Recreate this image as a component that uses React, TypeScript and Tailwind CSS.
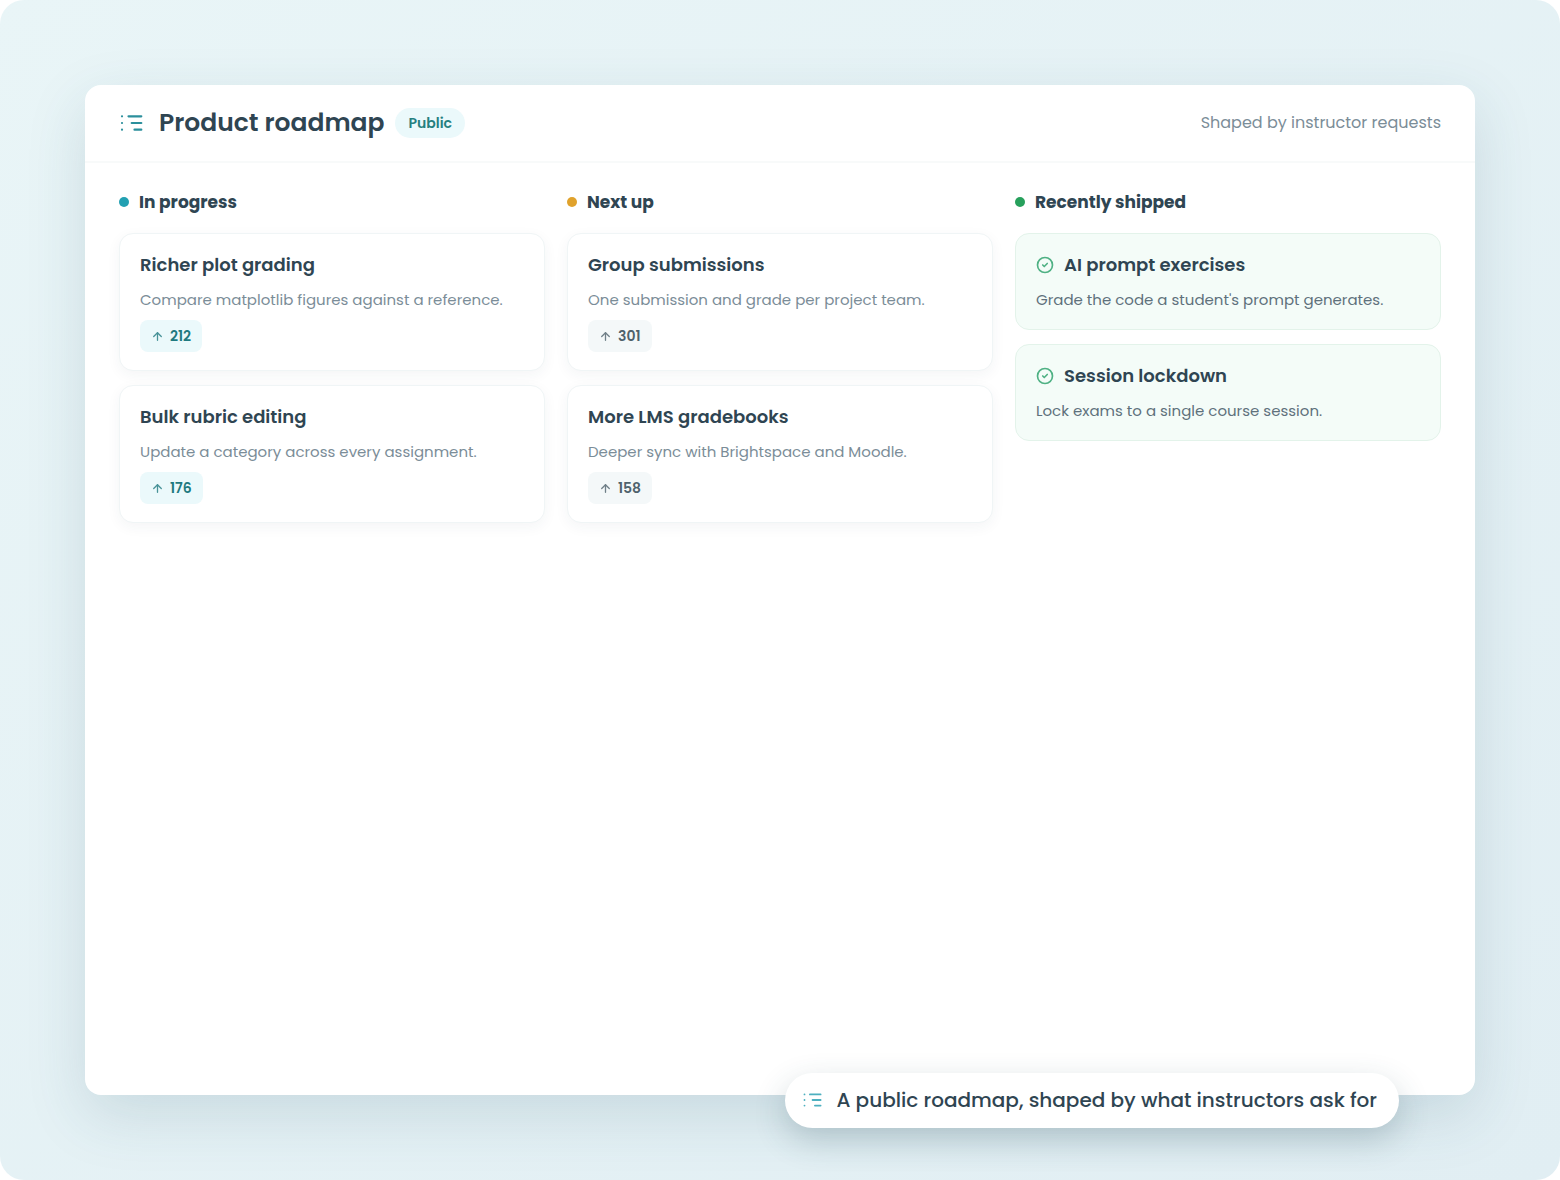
import { ArrowUp, CircleCheck } from "lucide-react";

interface RoadmapItem {
  title: string;
  description: string;
  votes?: number;
}

interface RoadmapColumn {
  label: string;
  dot: string;
  chip?: string;
  items: RoadmapItem[];
}

const columns: RoadmapColumn[] = [
  {
    label: "In progress",
    dot: "bg-[#22a0b2]",
    chip: "bg-[#ebf9fb] text-[#1f7a80]",
    items: [
      {
        title: "Richer plot grading",
        description: "Compare matplotlib figures against a reference.",
        votes: 212,
      },
      {
        title: "Bulk rubric editing",
        description: "Update a category across every assignment.",
        votes: 176,
      },
    ],
  },
  {
    label: "Next up",
    dot: "bg-[#e0a22c]",
    chip: "bg-[#f4f8f9] text-[#4f626c]",
    items: [
      {
        title: "Group submissions",
        description: "One submission and grade per project team.",
        votes: 301,
      },
      {
        title: "More LMS gradebooks",
        description: "Deeper sync with Brightspace and Moodle.",
        votes: 158,
      },
    ],
  },
  {
    label: "Recently shipped",
    dot: "bg-[#27a05c]",
    items: [
      {
        title: "AI prompt exercises",
        description: "Grade the code a student's prompt generates.",
      },
      {
        title: "Session lockdown",
        description: "Lock exams to a single course session.",
      },
    ],
  },
];

function RoadmapIcon({ className }: { className?: string }) {
  return (
    <svg
      viewBox="0 0 24 24"
      fill="none"
      stroke="currentColor"
      strokeWidth="2.2"
      strokeLinecap="round"
      className={className}
      aria-hidden="true"
    >
      <path d="M9.5 5.3h12.8M12.7 12h9.6M15.5 18.7h6.8" />
      <path d="M3 5.3h.01M3 12h.01M3 18.7h.01" />
    </svg>
  );
}

function OpenCard({ item, chip }: { item: RoadmapItem; chip?: string }) {
  return (
    <article className="rounded-[14px] border border-[#f0f5f6] bg-white px-5 py-[18px] shadow-[0_4px_14px_rgba(30,60,70,0.05)]">
      <h3 className="text-lg leading-[26px] font-semibold">{item.title}</h3>
      <p className="mt-2.5 text-[15px] leading-[23px] text-[#7b8d98]">
        {item.description}
      </p>
      <div
        className={`mt-[9px] flex h-8 w-fit items-center gap-1.5 rounded-lg px-[11px] text-sm font-semibold ${chip}`}
      >
        <ArrowUp className="size-[13px] opacity-80" strokeWidth={2.4} />
        {item.votes}
      </div>
    </article>
  );
}

function ShippedCard({ item }: { item: RoadmapItem }) {
  return (
    <article className="rounded-[14px] border border-[#e3f3ea] bg-[#f4fcf8] px-5 py-[18px]">
      <h3 className="flex items-center gap-2.5 text-lg leading-[26px] font-semibold">
        <CircleCheck className="size-[18px] text-[#4fb184]" strokeWidth={2.2} />
        {item.title}
      </h3>
      <p className="mt-2.5 text-[15px] leading-[23px] text-[#5f717c]">
        {item.description}
      </p>
    </article>
  );
}

export default function App() {
  return (
    <div className="bg-white font-['Poppins','Inter',sans-serif] text-[#2f4552]">
      <main className="relative flex min-h-screen flex-col rounded-[24px] bg-linear-to-br from-[#e9f5f7] to-[#e1eef3] p-[85px]">
        <section className="flex-1 rounded-2xl bg-white shadow-[0_20px_60px_rgba(40,90,105,0.15)]">
          {/* Header */}
          <header className="flex h-[78px] items-center border-b-2 border-[#f8fafa] px-[34px]">
            <RoadmapIcon className="size-6 text-[#2b8f9c]" />
            <h1 className="ml-4 text-[25px] leading-8 font-semibold">
              Product roadmap
            </h1>
            <span className="ml-[11px] rounded-full bg-[#ebf9fb] px-[13px] py-[5px] text-sm font-semibold text-[#25807f]">
              Public
            </span>
            <p className="ml-auto text-base text-[#7b8d98]">
              Shaped by instructor requests
            </p>
          </header>

          {/* Columns */}
          <div className="grid grid-cols-3 gap-[22px] px-[34px] pt-[25px] pb-8">
            {columns.map((column) => (
              <section key={column.label}>
                <h2 className="flex items-center gap-2.5 text-[17px] leading-7 font-bold">
                  <span className={`size-2.5 rounded-full ${column.dot}`} />
                  {column.label}
                </h2>
                <div className="mt-[17px] flex flex-col gap-[14px]">
                  {column.items.map((item) =>
                    item.votes ? (
                      <OpenCard key={item.title} item={item} chip={column.chip} />
                    ) : (
                      <ShippedCard key={item.title} item={item} />
                    )
                  )}
                </div>
              </section>
            ))}
          </div>
        </section>

        {/* Floating caption */}
        <p className="absolute right-[161px] bottom-[52px] flex items-center gap-[14px] rounded-full bg-white pt-[13px] pr-[22px] pb-[14px] pl-[17px] text-xl leading-7 font-medium shadow-[0_12px_32px_rgba(40,80,92,0.24)]">
          <RoadmapIcon className="size-5 text-[#4db0c0]" />
          A public roadmap, shaped by what instructors ask for
        </p>
      </main>
    </div>
  );
}
